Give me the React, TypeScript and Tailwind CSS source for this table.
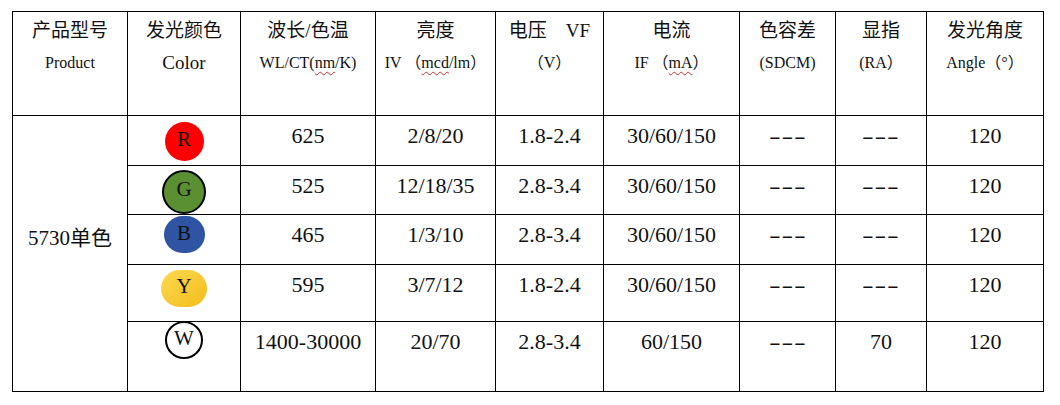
const rows = [
  { letter: "R", wl: "625", iv: "2/8/20", vf: "1.8-2.4", ma: "30/60/150", sdcm: "---", ra: "---", angle: "120" },
  { letter: "G", wl: "525", iv: "12/18/35", vf: "2.8-3.4", ma: "30/60/150", sdcm: "---", ra: "---", angle: "120" },
  { letter: "B", wl: "465", iv: "1/3/10", vf: "2.8-3.4", ma: "30/60/150", sdcm: "---", ra: "---", angle: "120" },
  { letter: "Y", wl: "595", iv: "3/7/12", vf: "1.8-2.4", ma: "30/60/150", sdcm: "---", ra: "---", angle: "120" },
  { letter: "W", wl: "1400-30000", iv: "20/70", vf: "2.8-3.4", ma: "60/150", sdcm: "---", ra: "70", angle: "120" },
];

const rowHeights = ["h-[50px]", "h-[49px]", "h-[50px]", "h-[57px]", "h-[70px]"];

function Dot({ letter }: { letter: string }) {
  if (letter === "R")
    return <span className="mx-auto mt-[6px] flex h-[39px] w-[39px] items-center justify-center rounded-full bg-[#ff0000] pb-[3px]">R</span>;
  if (letter === "G")
    return <span className="mx-auto mt-[4px] flex h-[44px] w-[44px] items-center justify-center rounded-full border-2 border-black bg-[#5a8f32] pb-[4px]">G</span>;
  if (letter === "B")
    return <span className="mx-auto mt-[1px] flex h-[37px] w-[41px] items-center justify-center rounded-full bg-[#2e54a3] pb-[2px]">B</span>;
  if (letter === "Y")
    return <span className="mx-auto mt-[5px] flex h-[37px] w-[46px] items-center justify-center rounded-full bg-gradient-to-br from-[#fdd94c] to-[#f2bd17] pb-[4px]">Y</span>;
  return <span className="mx-auto -mt-[1px] flex h-[38px] w-[38px] items-center justify-center rounded-full border-2 border-black bg-white pb-[2px]">W</span>;
}

function Wavy({ children }: { children: React.ReactNode }) {
  return <span className="underline decoration-wavy decoration-[#d03030] decoration-1 underline-offset-[3px]">{children}</span>;
}

function Dashes({ text }: { text: string }) {
  return <span className="inline-block scale-x-[1.6] tracking-[0.5px]">{text}</span>;
}

function Head({ top, bottom, big }: { top: React.ReactNode; bottom: React.ReactNode; big?: boolean }) {
  return (
    <th className="border border-black p-0 align-top font-normal">
      <div className="h-[34px] pt-[2px] text-[19px] leading-[34px]">{top}</div>
      <div className={`${big ? "text-[19px]" : "text-[16px]"} leading-[34px]`}>{bottom}</div>
    </th>
  );
}

export default function App() {
  const cell = "border border-black p-0 pt-[8px] text-center align-top text-[22px] leading-[24px]";
  return (
    <div className="min-h-[405px] w-[1060px] bg-white pl-[12px] pt-[11px] font-['Liberation_Serif','Noto_Sans_CJK_SC',serif] text-[#111]">
      <table className="w-[1031px] table-fixed border-collapse border-[1.5px] border-black">
        <colgroup>
          <col className="w-[115px]" />
          <col className="w-[113px]" />
          <col className="w-[135px]" />
          <col className="w-[120px]" />
          <col className="w-[108px]" />
          <col className="w-[136px]" />
          <col className="w-[96px]" />
          <col className="w-[91px]" />
          <col className="w-[117px]" />
        </colgroup>
        <thead>
          <tr className="h-[104px]">
            <Head top="产品型号" bottom="Product" />
            <Head top="发光颜色" bottom="Color" big />
            <Head top="波长/色温" bottom={<>WL/CT(<Wavy>nm</Wavy>/K)</>} />
            <Head top="亮度" bottom={<>IV （<Wavy>mcd</Wavy>/lm）</>} />
            <Head top="电压　VF" bottom="（V）" />
            <Head top="电流" bottom={<>IF （<Wavy>mA</Wavy>）</>} />
            <Head top="色容差" bottom="(SDCM)" />
            <Head top="显指" bottom="(RA）" />
            <Head top="发光角度" bottom="Angle（°）" />
          </tr>
        </thead>
        <tbody>
          {rows.map((r, i) => (
            <tr key={r.letter} className={rowHeights[i]}>
              {i === 0 && (
                <td rowSpan={5} className="border border-black p-0 pt-[110px] text-center align-top text-[21px] leading-[24px]">
                  5730单色
                </td>
              )}
              <td className="border border-black p-0 text-center align-top text-[21px]">
                <Dot letter={r.letter} />
              </td>
              <td className={cell}>{r.wl}</td>
              <td className={cell}>{r.iv}</td>
              <td className={cell}>{r.vf}</td>
              <td className={cell}>{r.ma}</td>
              <td className={cell}><Dashes text={r.sdcm} /></td>
              <td className={cell}>{r.ra === "---" ? <Dashes text={r.ra} /> : r.ra}</td>
              <td className={cell}>{r.angle}</td>
            </tr>
          ))}
        </tbody>
      </table>
    </div>
  );
}
